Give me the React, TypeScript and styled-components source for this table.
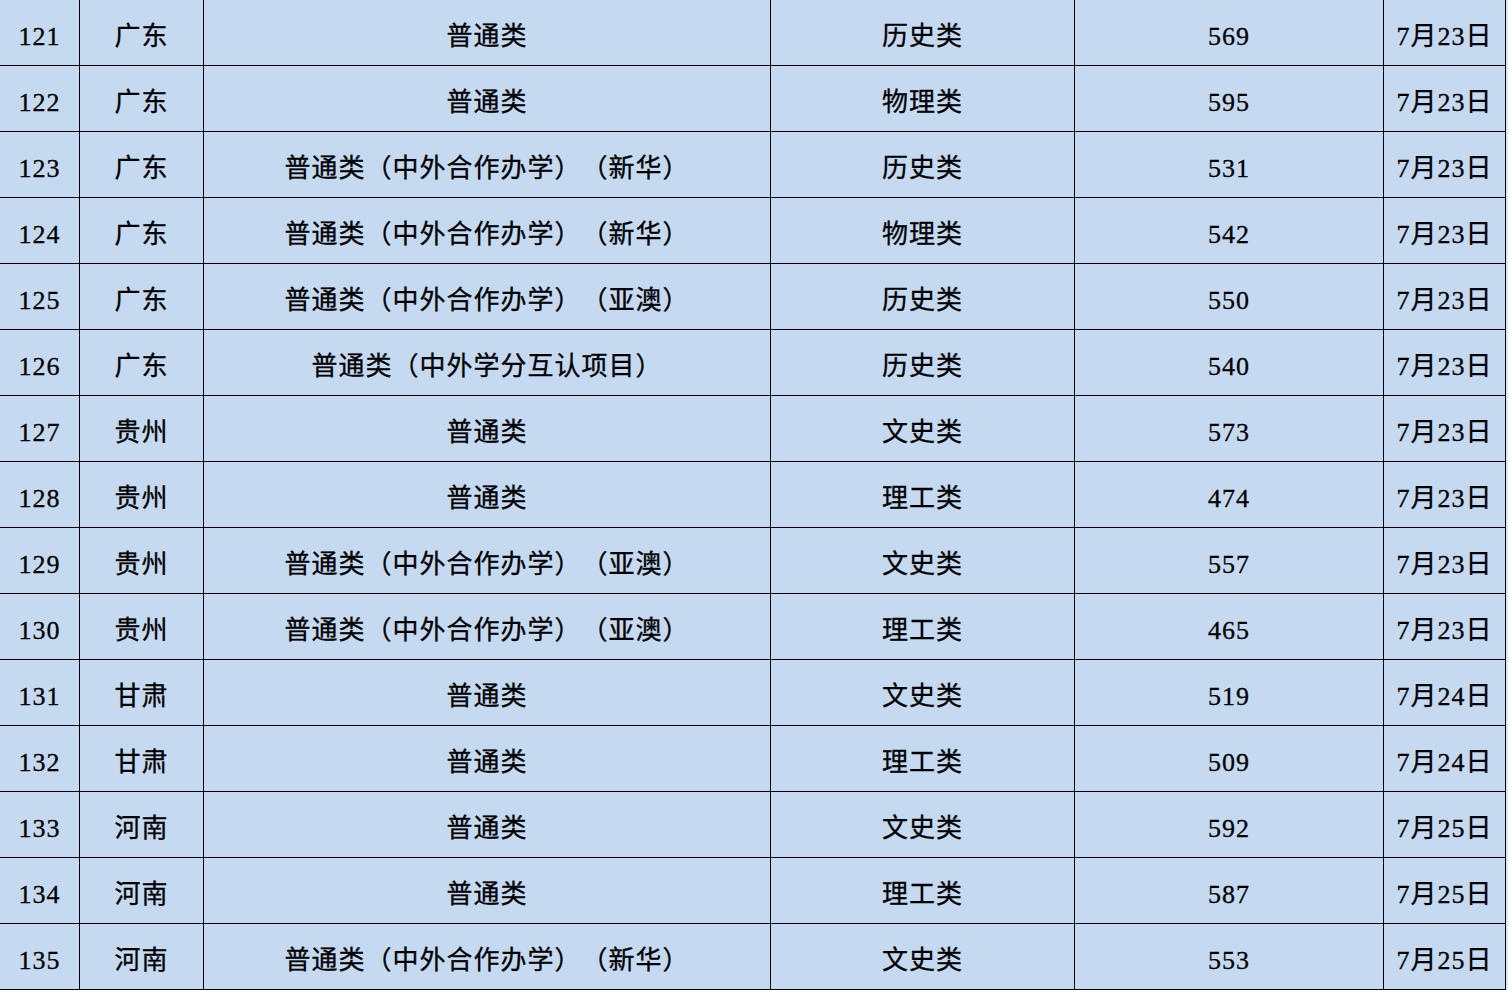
import React from 'react';
import styled, { createGlobalStyle } from 'styled-components';

type Row = [number, string, string, string, number, string];

const rows: Row[] = [
  [121, '广东', '普通类', '历史类', 569, '7月23日'],
  [122, '广东', '普通类', '物理类', 595, '7月23日'],
  [123, '广东', '普通类（中外合作办学）（新华）', '历史类', 531, '7月23日'],
  [124, '广东', '普通类（中外合作办学）（新华）', '物理类', 542, '7月23日'],
  [125, '广东', '普通类（中外合作办学）（亚澳）', '历史类', 550, '7月23日'],
  [126, '广东', '普通类（中外学分互认项目）', '历史类', 540, '7月23日'],
  [127, '贵州', '普通类', '文史类', 573, '7月23日'],
  [128, '贵州', '普通类', '理工类', 474, '7月23日'],
  [129, '贵州', '普通类（中外合作办学）（亚澳）', '文史类', 557, '7月23日'],
  [130, '贵州', '普通类（中外合作办学）（亚澳）', '理工类', 465, '7月23日'],
  [131, '甘肃', '普通类', '文史类', 519, '7月24日'],
  [132, '甘肃', '普通类', '理工类', 509, '7月24日'],
  [133, '河南', '普通类', '文史类', 592, '7月25日'],
  [134, '河南', '普通类', '理工类', 587, '7月25日'],
  [135, '河南', '普通类（中外合作办学）（新华）', '文史类', 553, '7月25日'],
];

export default function App() {
  return (
    <>
      <GlobalStyle />
      <Sheet>
        {rows.map((row) => (
          <TableRow key={row[0]}>
            {row.map((value, i) => (
              <Cell key={i}>{value}</Cell>
            ))}
          </TableRow>
        ))}
      </Sheet>
    </>
  );
}

const GlobalStyle = createGlobalStyle`
  html, body {
    margin: 0;
    padding: 0;
    background: #dfe9f6;
  }
`;

const Sheet = styled.div`
  width: 1506px;
  background: #c5d9f1;
  font-family: 'Liberation Serif', 'Noto Sans CJK SC', serif;
  font-size: 26px;
  line-height: 30px;
  letter-spacing: 1px;
  color: #000;
  text-spacing-trim: space-all;
  -webkit-text-stroke: 0.3px #000;
`;

const TableRow = styled.div`
  display: grid;
  grid-template-columns: 80px 124px 567px 304px 309px 122px;
  height: 66px;
  border-bottom: 1px solid #000;
  box-sizing: border-box;
`;

const Cell = styled.div`
  display: flex;
  align-items: center;
  justify-content: center;
  padding-top: 9px;
  box-sizing: border-box;
  border-right: 1px solid #000;
  white-space: nowrap;
`;
